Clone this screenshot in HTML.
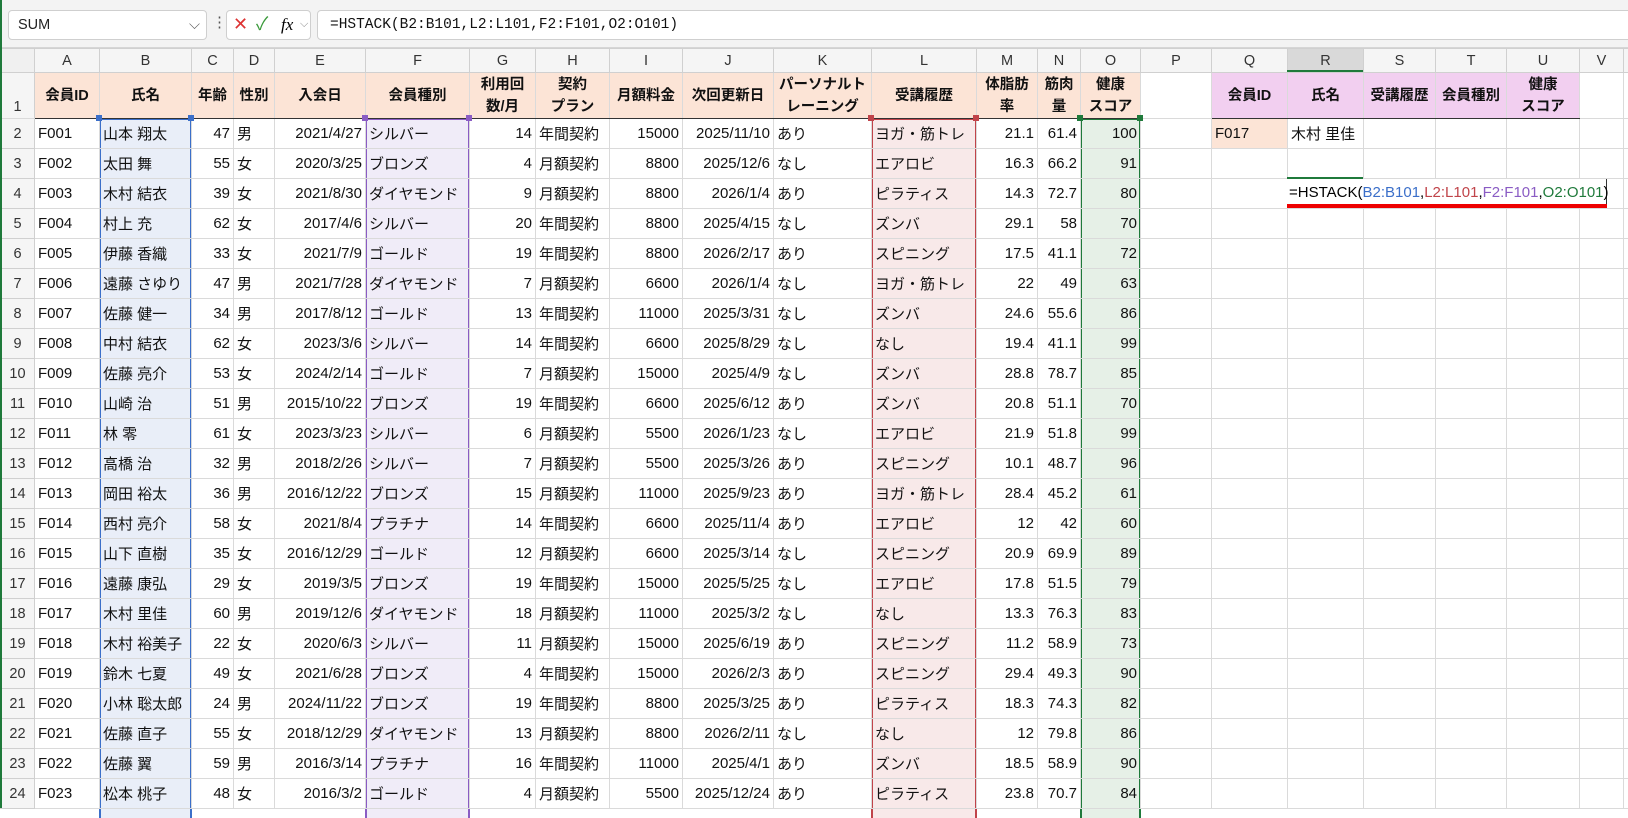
<!DOCTYPE html>
<html><head><meta charset="utf-8"><style>
*{margin:0;padding:0;box-sizing:border-box}
body{width:1628px;height:808px;overflow:hidden;background:#fff;font-family:"Liberation Sans","Noto Sans CJK JP",sans-serif;position:relative}
#top{position:absolute;left:0;top:0;width:1628px;height:48px;background:#f3f3f3;border-bottom:1px solid #d6d6d6}
.box{position:absolute;background:#fff;border:1px solid #cfcfcf;border-radius:4px;top:10px;height:30px;font-size:14.5px;line-height:28px}
table{position:absolute;left:0;top:48px;width:1628px;border-collapse:collapse;table-layout:fixed;z-index:2}
td{border:1px solid #dadada;font-size:15px;white-space:nowrap;overflow:visible;padding:0 3px;height:30px;color:#111}
tr.ch td{height:24px;background:#f5f5f5;text-align:center;color:#333;font-size:14.5px;border-color:#d0d0d0}
tr.h1 td{height:46px;font-weight:bold;text-align:center;line-height:22px;font-size:14.5px}
tr.h1 td.p{background:#fce4d6}
tr.h1 td.m{background:#f2cff0}
tr.h1 td{border-bottom:1.5px solid #333}
tr.h1 td.rh,tr.h1 td.e{border-bottom:1px solid #dadada}
td.rh{background:#f5f5f5;text-align:center;color:#333;font-size:14.5px;border-color:#d0d0d0}
td.r{text-align:right}
.ov{position:absolute;top:118px;height:700px;z-index:1;border:2px solid;border-bottom:none}
.hd{position:absolute;top:115px;width:6px;height:6px;z-index:3}
</style></head><body>
<div style="position:absolute;left:0;top:0;width:2px;height:808px;background:#1f7a3b;z-index:5"></div>
<div id="top">
<div class="box" style="left:8px;width:199px;padding-left:9px;color:#222">SUM<span style="position:absolute;right:6px;top:0;color:#555">⌵</span></div>
<div style="position:absolute;left:212px;top:13px;font-size:15px;color:#555">⋮</div>
<div class="box" style="left:226px;width:85px;font-size:18px;line-height:27px"><span style="position:absolute;left:6px;color:#d33">✕</span><span style="position:absolute;left:29px;color:#3a9a3a">✓</span><span style="position:absolute;left:54px;font-family:'Liberation Serif',serif;font-style:italic;font-size:17px">fx</span><span style="position:absolute;left:73px;font-size:11px;color:#888">⌵</span></div>
<div class="box" style="left:317px;width:1330px;padding-left:12px;font-family:'Liberation Mono',monospace;font-size:14.5px;color:#111">=HSTACK(B2:B101,L2:L101,F2:F101,O2:O101)</div>
</div>
<div class="ov" style="left:99px;width:93px;background:#e9eef8;border-color:#3b6fc9"></div>
<div class="ov" style="left:365px;width:105px;background:#f0ecf8;border-color:#8a5cc4"></div>
<div class="ov" style="left:871px;width:106px;background:#f8e9e9;border-color:#c0444a"></div>
<div class="ov" style="left:1080px;width:61px;background:#e6f0e7;border-color:#1f7a3b"></div>
<div class="hd" style="left:96px;background:#3b6fc9"></div><div class="hd" style="left:188px;background:#3b6fc9"></div>
<div class="hd" style="left:362px;background:#8a5cc4"></div><div class="hd" style="left:466px;background:#8a5cc4"></div>
<div class="hd" style="left:868px;background:#c0444a"></div><div class="hd" style="left:973px;background:#c0444a"></div>
<div class="hd" style="left:1077px;background:#1f7a3b"></div><div class="hd" style="left:1137px;background:#1f7a3b"></div>
<div style="position:absolute;left:1287px;top:70px;width:76px;height:2px;background:#1f7a3b;z-index:3"></div>
<div style="position:absolute;left:1287px;top:177px;width:76px;height:2px;background:#1f7a3b;z-index:3"></div>
<div style="position:absolute;left:1287px;top:179px;width:320px;height:25px;background:#fff;z-index:3;font-size:15px;line-height:28px;padding-left:2px;white-space:nowrap;border-right:1px solid #333">=HSTACK(<span style="color:#3b6fc9">B2:B101</span>,<span style="color:#c0444a">L2:L101</span>,<span style="color:#8a5cc4">F2:F101</span>,<span style="color:#1f7a3b">O2:O101</span>)</div>
<div style="position:absolute;left:1287px;top:204px;width:320px;height:4px;background:#e00;z-index:3"></div>
<table>
<colgroup><col style="width:34px"><col style="width:65px"><col style="width:92px"><col style="width:42px"><col style="width:41px"><col style="width:91px"><col style="width:104px"><col style="width:66px"><col style="width:74px"><col style="width:73px"><col style="width:91px"><col style="width:98px"><col style="width:105px"><col style="width:61px"><col style="width:43px"><col style="width:60px"><col style="width:71px"><col style="width:76px"><col style="width:76px"><col style="width:72px"><col style="width:71px"><col style="width:73px"><col style="width:44px"><col style="width:5px"></colgroup>
<tr class="ch"><td style="background:#f0f0f0"></td><td>A</td><td>B</td><td>C</td><td>D</td><td>E</td><td>F</td><td>G</td><td>H</td><td>I</td><td>J</td><td>K</td><td>L</td><td>M</td><td>N</td><td>O</td><td>P</td><td>Q</td><td style="background:#d9d9d9">R</td><td>S</td><td>T</td><td>U</td><td>V</td><td></td></tr>
<tr class="h1"><td class="rh" style="vertical-align:bottom;font-weight:normal">1</td><td class="p">会員ID</td><td class="p">氏名</td><td class="p">年齢</td><td class="p">性別</td><td class="p">入会日</td><td class="p">会員種別</td><td class="p">利用回<br>数/月</td><td class="p">契約<br>プラン</td><td class="p">月額料金</td><td class="p">次回更新日</td><td class="p">パーソナルト<br>レーニング</td><td class="p">受講履歴</td><td class="p">体脂肪<br>率</td><td class="p">筋肉<br>量</td><td class="p">健康<br>スコア</td><td class="e"></td><td class="m">会員ID</td><td class="m">氏名</td><td class="m">受講履歴</td><td class="m">会員種別</td><td class="m">健康<br>スコア</td><td class="e"></td><td class="e"></td></tr>
<tr><td class="rh">2</td><td>F001</td><td>山本 翔太</td><td class="r">47</td><td>男</td><td class="r">2021/4/27</td><td>シルバー</td><td class="r">14</td><td>年間契約</td><td class="r">15000</td><td class="r">2025/11/10</td><td>あり</td><td>ヨガ・筋トレ</td><td class="r">21.1</td><td class="r">61.4</td><td class="r">100</td><td></td><td style="background:#fce4d6">F017</td><td>木村 里佳</td><td></td><td></td><td></td><td></td><td></td></tr>
<tr><td class="rh">3</td><td>F002</td><td>太田 舞</td><td class="r">55</td><td>女</td><td class="r">2020/3/25</td><td>ブロンズ</td><td class="r">4</td><td>月額契約</td><td class="r">8800</td><td class="r">2025/12/6</td><td>なし</td><td>エアロビ</td><td class="r">16.3</td><td class="r">66.2</td><td class="r">91</td><td></td><td></td><td></td><td></td><td></td><td></td><td></td><td></td></tr>
<tr><td class="rh">4</td><td>F003</td><td>木村 結衣</td><td class="r">39</td><td>女</td><td class="r">2021/8/30</td><td>ダイヤモンド</td><td class="r">9</td><td>月額契約</td><td class="r">8800</td><td class="r">2026/1/4</td><td>あり</td><td>ピラティス</td><td class="r">14.3</td><td class="r">72.7</td><td class="r">80</td><td></td><td></td><td></td><td></td><td></td><td></td><td></td><td></td></tr>
<tr><td class="rh">5</td><td>F004</td><td>村上 充</td><td class="r">62</td><td>女</td><td class="r">2017/4/6</td><td>シルバー</td><td class="r">20</td><td>年間契約</td><td class="r">8800</td><td class="r">2025/4/15</td><td>なし</td><td>ズンバ</td><td class="r">29.1</td><td class="r">58</td><td class="r">70</td><td></td><td></td><td></td><td></td><td></td><td></td><td></td><td></td></tr>
<tr><td class="rh">6</td><td>F005</td><td>伊藤 香織</td><td class="r">33</td><td>女</td><td class="r">2021/7/9</td><td>ゴールド</td><td class="r">19</td><td>年間契約</td><td class="r">8800</td><td class="r">2026/2/17</td><td>あり</td><td>スピニング</td><td class="r">17.5</td><td class="r">41.1</td><td class="r">72</td><td></td><td></td><td></td><td></td><td></td><td></td><td></td><td></td></tr>
<tr><td class="rh">7</td><td>F006</td><td>遠藤 さゆり</td><td class="r">47</td><td>男</td><td class="r">2021/7/28</td><td>ダイヤモンド</td><td class="r">7</td><td>月額契約</td><td class="r">6600</td><td class="r">2026/1/4</td><td>なし</td><td>ヨガ・筋トレ</td><td class="r">22</td><td class="r">49</td><td class="r">63</td><td></td><td></td><td></td><td></td><td></td><td></td><td></td><td></td></tr>
<tr><td class="rh">8</td><td>F007</td><td>佐藤 健一</td><td class="r">34</td><td>男</td><td class="r">2017/8/12</td><td>ゴールド</td><td class="r">13</td><td>年間契約</td><td class="r">11000</td><td class="r">2025/3/31</td><td>なし</td><td>ズンバ</td><td class="r">24.6</td><td class="r">55.6</td><td class="r">86</td><td></td><td></td><td></td><td></td><td></td><td></td><td></td><td></td></tr>
<tr><td class="rh">9</td><td>F008</td><td>中村 結衣</td><td class="r">62</td><td>女</td><td class="r">2023/3/6</td><td>シルバー</td><td class="r">14</td><td>年間契約</td><td class="r">6600</td><td class="r">2025/8/29</td><td>なし</td><td>なし</td><td class="r">19.4</td><td class="r">41.1</td><td class="r">99</td><td></td><td></td><td></td><td></td><td></td><td></td><td></td><td></td></tr>
<tr><td class="rh">10</td><td>F009</td><td>佐藤 亮介</td><td class="r">53</td><td>女</td><td class="r">2024/2/14</td><td>ゴールド</td><td class="r">7</td><td>月額契約</td><td class="r">15000</td><td class="r">2025/4/9</td><td>なし</td><td>ズンバ</td><td class="r">28.8</td><td class="r">78.7</td><td class="r">85</td><td></td><td></td><td></td><td></td><td></td><td></td><td></td><td></td></tr>
<tr><td class="rh">11</td><td>F010</td><td>山崎 治</td><td class="r">51</td><td>男</td><td class="r">2015/10/22</td><td>ブロンズ</td><td class="r">19</td><td>年間契約</td><td class="r">6600</td><td class="r">2025/6/12</td><td>あり</td><td>ズンバ</td><td class="r">20.8</td><td class="r">51.1</td><td class="r">70</td><td></td><td></td><td></td><td></td><td></td><td></td><td></td><td></td></tr>
<tr><td class="rh">12</td><td>F011</td><td>林 零</td><td class="r">61</td><td>女</td><td class="r">2023/3/23</td><td>シルバー</td><td class="r">6</td><td>月額契約</td><td class="r">5500</td><td class="r">2026/1/23</td><td>なし</td><td>エアロビ</td><td class="r">21.9</td><td class="r">51.8</td><td class="r">99</td><td></td><td></td><td></td><td></td><td></td><td></td><td></td><td></td></tr>
<tr><td class="rh">13</td><td>F012</td><td>高橋 治</td><td class="r">32</td><td>男</td><td class="r">2018/2/26</td><td>シルバー</td><td class="r">7</td><td>月額契約</td><td class="r">5500</td><td class="r">2025/3/26</td><td>あり</td><td>スピニング</td><td class="r">10.1</td><td class="r">48.7</td><td class="r">96</td><td></td><td></td><td></td><td></td><td></td><td></td><td></td><td></td></tr>
<tr><td class="rh">14</td><td>F013</td><td>岡田 裕太</td><td class="r">36</td><td>男</td><td class="r">2016/12/22</td><td>ブロンズ</td><td class="r">15</td><td>月額契約</td><td class="r">11000</td><td class="r">2025/9/23</td><td>あり</td><td>ヨガ・筋トレ</td><td class="r">28.4</td><td class="r">45.2</td><td class="r">61</td><td></td><td></td><td></td><td></td><td></td><td></td><td></td><td></td></tr>
<tr><td class="rh">15</td><td>F014</td><td>西村 亮介</td><td class="r">58</td><td>女</td><td class="r">2021/8/4</td><td>プラチナ</td><td class="r">14</td><td>年間契約</td><td class="r">6600</td><td class="r">2025/11/4</td><td>あり</td><td>エアロビ</td><td class="r">12</td><td class="r">42</td><td class="r">60</td><td></td><td></td><td></td><td></td><td></td><td></td><td></td><td></td></tr>
<tr><td class="rh">16</td><td>F015</td><td>山下 直樹</td><td class="r">35</td><td>女</td><td class="r">2016/12/29</td><td>ゴールド</td><td class="r">12</td><td>月額契約</td><td class="r">6600</td><td class="r">2025/3/14</td><td>なし</td><td>スピニング</td><td class="r">20.9</td><td class="r">69.9</td><td class="r">89</td><td></td><td></td><td></td><td></td><td></td><td></td><td></td><td></td></tr>
<tr><td class="rh">17</td><td>F016</td><td>遠藤 康弘</td><td class="r">29</td><td>女</td><td class="r">2019/3/5</td><td>ブロンズ</td><td class="r">19</td><td>年間契約</td><td class="r">15000</td><td class="r">2025/5/25</td><td>なし</td><td>エアロビ</td><td class="r">17.8</td><td class="r">51.5</td><td class="r">79</td><td></td><td></td><td></td><td></td><td></td><td></td><td></td><td></td></tr>
<tr><td class="rh">18</td><td>F017</td><td>木村 里佳</td><td class="r">60</td><td>男</td><td class="r">2019/12/6</td><td>ダイヤモンド</td><td class="r">18</td><td>月額契約</td><td class="r">11000</td><td class="r">2025/3/2</td><td>なし</td><td>なし</td><td class="r">13.3</td><td class="r">76.3</td><td class="r">83</td><td></td><td></td><td></td><td></td><td></td><td></td><td></td><td></td></tr>
<tr><td class="rh">19</td><td>F018</td><td>木村 裕美子</td><td class="r">22</td><td>女</td><td class="r">2020/6/3</td><td>シルバー</td><td class="r">11</td><td>月額契約</td><td class="r">15000</td><td class="r">2025/6/19</td><td>あり</td><td>スピニング</td><td class="r">11.2</td><td class="r">58.9</td><td class="r">73</td><td></td><td></td><td></td><td></td><td></td><td></td><td></td><td></td></tr>
<tr><td class="rh">20</td><td>F019</td><td>鈴木 七夏</td><td class="r">49</td><td>女</td><td class="r">2021/6/28</td><td>ブロンズ</td><td class="r">4</td><td>年間契約</td><td class="r">15000</td><td class="r">2026/2/3</td><td>あり</td><td>スピニング</td><td class="r">29.4</td><td class="r">49.3</td><td class="r">90</td><td></td><td></td><td></td><td></td><td></td><td></td><td></td><td></td></tr>
<tr><td class="rh">21</td><td>F020</td><td>小林 聡太郎</td><td class="r">24</td><td>男</td><td class="r">2024/11/22</td><td>ブロンズ</td><td class="r">19</td><td>年間契約</td><td class="r">8800</td><td class="r">2025/3/25</td><td>あり</td><td>ピラティス</td><td class="r">18.3</td><td class="r">74.3</td><td class="r">82</td><td></td><td></td><td></td><td></td><td></td><td></td><td></td><td></td></tr>
<tr><td class="rh">22</td><td>F021</td><td>佐藤 直子</td><td class="r">55</td><td>女</td><td class="r">2018/12/29</td><td>ダイヤモンド</td><td class="r">13</td><td>月額契約</td><td class="r">8800</td><td class="r">2026/2/11</td><td>なし</td><td>なし</td><td class="r">12</td><td class="r">79.8</td><td class="r">86</td><td></td><td></td><td></td><td></td><td></td><td></td><td></td><td></td></tr>
<tr><td class="rh">23</td><td>F022</td><td>佐藤 翼</td><td class="r">59</td><td>男</td><td class="r">2016/3/14</td><td>プラチナ</td><td class="r">16</td><td>年間契約</td><td class="r">11000</td><td class="r">2025/4/1</td><td>あり</td><td>ズンバ</td><td class="r">18.5</td><td class="r">58.9</td><td class="r">90</td><td></td><td></td><td></td><td></td><td></td><td></td><td></td><td></td></tr>
<tr><td class="rh">24</td><td>F023</td><td>松本 桃子</td><td class="r">48</td><td>女</td><td class="r">2016/3/2</td><td>ゴールド</td><td class="r">4</td><td>月額契約</td><td class="r">5500</td><td class="r">2025/12/24</td><td>あり</td><td>ピラティス</td><td class="r">23.8</td><td class="r">70.7</td><td class="r">84</td><td></td><td></td><td></td><td></td><td></td><td></td><td></td><td></td></tr>
</table>
</body></html>
